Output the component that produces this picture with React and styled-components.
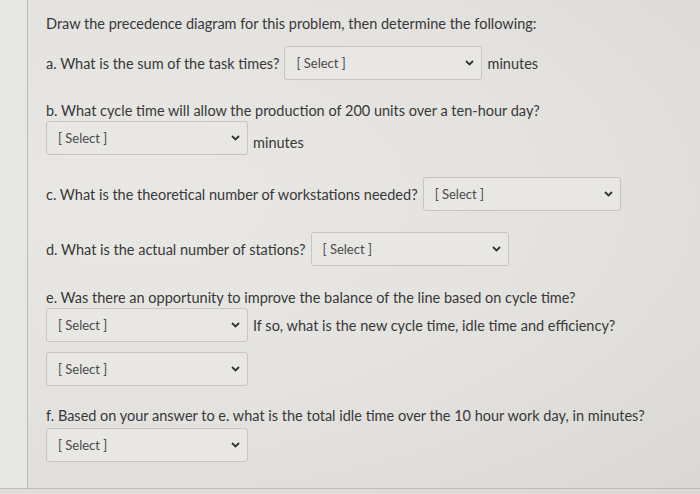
import React from "react";
import styled, { createGlobalStyle } from "styled-components";

const Global = createGlobalStyle`
  html, body {
    margin: 0;
    padding: 0;
  }
  body {
    width: 700px;
    height: 494px;
    overflow: hidden;
    background: radial-gradient(ellipse at 20% 40%, #e9e8e5 0%, #e3e2df 55%, #d9d8d4 100%);
    font-family: Lato, "Open Sans", sans-serif;
    color: #383838;
  }
`;

const Page = styled.div`
  display: flex;
  height: 488px;
  border-bottom: 1px solid #bdbcb8;
`;

const Gutter = styled.div`
  width: 27px;
  flex: none;
  border-right: 1px solid #b9b8b4;
  background: #e7e7e5;
`;

const Content = styled.div`
  flex: 1;
  display: flex;
  flex-direction: column;
  align-items: flex-start;
  padding: 14px 0 0 18px;
`;

const Line = styled.p`
  margin: ${(p) => p.$mt || 0}px 0 0;
  font-size: 14.5px;
  line-height: 20px;
  white-space: nowrap;
`;

const Row = styled.div`
  display: flex;
  align-items: center;
  gap: ${(p) => (p.$gap == null ? 5 : p.$gap)}px;
  margin-top: ${(p) => p.$mt || 0}px;
  font-size: 14.5px;
  white-space: nowrap;
`;

const Box = styled.div`
  position: relative;
  box-sizing: border-box;
  width: ${(p) => p.$w || 198}px;
  height: 34px;
  display: flex;
  align-items: center;
  padding-left: 11px;
  border: 1px solid #c6c5c1;
  border-radius: 3px;
  background: #e8e7e4;
  font-size: 13px;
  color: #4a4a4a;
`;

const Chevron = styled.svg`
  position: absolute;
  right: 7px;
  top: 50%;
  margin-top: -3px;
`;

const Unit = styled.span`
  font-size: 14.5px;
  align-self: ${(p) => (p.$low ? "flex-end" : "center")};
  margin-bottom: ${(p) => (p.$low ? 4 : 0)}px;
`;

const Select = ({ w }) => (
  <Box $w={w}>
    [ Select ]
    <Chevron width="9" height="6" viewBox="0 0 9 6">
      <path d="M1 1l3.5 3.5L8 1" fill="none" stroke="#333" strokeWidth="1.8" />
    </Chevron>
  </Box>
);

export default function App() {
  return (
    <Page>
      <Global />
      <Gutter />
      <Content>
        <Line>Draw the precedence diagram for this problem, then determine the following:</Line>
        <Row $mt={12}>
          <span>a. What is the sum of the task times?</span>
          <Select w={198} />
          <Unit>minutes</Unit>
        </Row>
        <Line $mt={21}>b. What cycle time will allow the production of 200 units over a ten-hour day?</Line>
        <Row>
          <Select w={202} />
          <Unit $low>minutes</Unit>
        </Row>
        <Row $mt={22}>
          <span>c. What is the theoretical number of workstations needed?</span>
          <Select w={198} />
        </Row>
        <Row $mt={21}>
          <span>d. What is the actual number of stations?</span>
          <Select w={198} />
        </Row>
        <Line $mt={22}>e. Was there an opportunity to improve the balance of the line based on cycle time?</Line>
        <Row>
          <Select w={202} />
          <Unit>If so, what is the new cycle time, idle time and efficiency?</Unit>
        </Row>
        <Row $mt={10}>
          <Select w={202} />
        </Row>
        <Line $mt={20}>f. Based on your answer to e. what is the total idle time over the 10 hour work day, in minutes?</Line>
        <Row $mt={2}>
          <Select w={202} />
        </Row>
      </Content>
    </Page>
  );
}
